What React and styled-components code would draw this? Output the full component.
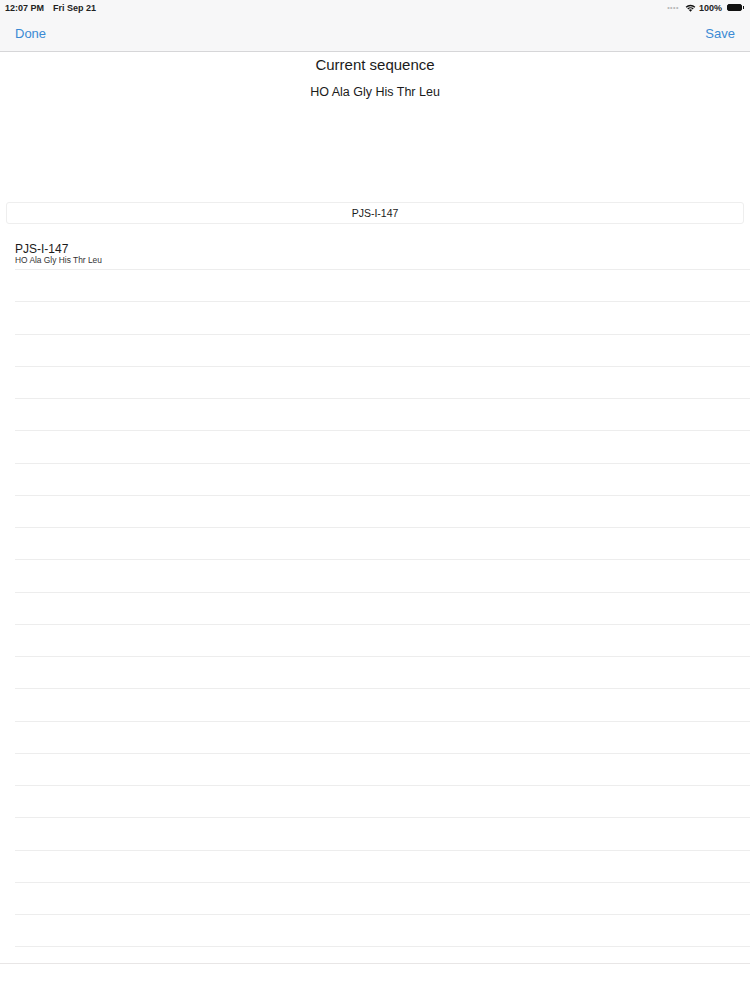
import React from 'react'
import styled, { createGlobalStyle } from 'styled-components'

const GlobalStyle = createGlobalStyle`
    html, body {
        margin: 0;
        padding: 0;
        background: #ffffff;
        font-family: "Liberation Sans", Arial, sans-serif;
        color: #111;
    }
`;

const Page = styled.div`
    width: 750px;
    height: 1000px;
    display: flex;
    flex-direction: column;
    background: #ffffff;
    overflow: hidden;
`;

const Header = styled.div`
    background: #f7f7f8;
    border-bottom: 1px solid #d6d6d8;
    height: 51px;
    display: flex;
    flex-direction: column;
`;

const StatusBar = styled.div`
    height: 15px;
    display: flex;
    align-items: center;
    justify-content: space-between;
    padding: 0 6px 0 5px;
    font-size: 9px;
    font-weight: bold;
    color: #222;
`;

const StatusLeft = styled.div`
    display: flex;
    gap: 9px;
`;

const StatusRight = styled.div`
    display: flex;
    align-items: center;
    gap: 3px;
`;

const Dots = styled.span`
    color: #b8b8b8;
    font-size: 7px;
    letter-spacing: 0.5px;
    margin-right: 3px;
`;

const Battery = styled.span`
    display: inline-block;
    width: 13px;
    height: 5px;
    border: 1px solid #111;
    border-radius: 2px;
    background: #111;
    position: relative;
    margin-left: 2px;
    margin-right: 2px;
    &::after {
        content: '';
        position: absolute;
        right: -3px;
        top: 1px;
        width: 1px;
        height: 3px;
        background: #111;
    }
`;

const NavBar = styled.div`
    flex: 1;
    display: flex;
    align-items: center;
    justify-content: space-between;
    padding: 0 15px;
`;

const NavButton = styled.span`
    color: #3b8ad4;
    font-size: 13px;
`;

const Summary = styled.div`
    display: flex;
    flex-direction: column;
    align-items: center;
    padding-top: 4px;
    height: 150px;
    box-sizing: border-box;
`;

const SummaryTitle = styled.div`
    font-size: 15px;
    color: #1b1b1b;
`;

const SummarySequence = styled.div`
    font-size: 12.5px;
    color: #1b1b1b;
    margin-top: 12px;
`;

const SearchWrap = styled.div`
    padding: 0 6px;
`;

const SearchField = styled.div`
    height: 20px;
    border: 1px solid #eeeeee;
    border-radius: 3px;
    display: flex;
    align-items: center;
    justify-content: center;
    font-size: 10.5px;
    color: #1b1b1b;
    background: #fff;
`;

const List = styled.div`
    margin-top: 12px;
    height: 727px;
    border-bottom: 1px solid #e8e6e6;
    overflow: hidden;
`;

const Row = styled.div`
    height: ${p => p.h}px;
    margin-left: 15px;
    border-bottom: 1px solid #ededed;
    box-sizing: border-box;
    display: flex;
    flex-direction: column;
    justify-content: center;
`;

const RowTitle = styled.div`
    font-size: 12px;
    color: #1b1b1b;
    line-height: 13px;
    margin-top: 3px;
`;

const RowSubtitle = styled.div`
    font-size: 8.4px;
    color: #333;
    line-height: 9px;
`;

const Wifi = () => (
    <svg width="11" height="8" viewBox="0 0 22 16">
        <path d="M11 15.5 L7.8 12.2 a4.6 4.6 0 0 1 6.4 0 Z" fill="#111" />
        <path d="M4.6 9 a9 9 0 0 1 12.8 0 l-1.9 1.9 a6.3 6.3 0 0 0 -9 0 Z" fill="#111" />
        <path d="M1.3 5.7 a13.7 13.7 0 0 1 19.4 0 l-1.9 1.9 a11 11 0 0 0 -15.6 0 Z" fill="#111" />
    </svg>
);

const App = () => {
    const rows = [];
    for (let i = 0; i < 22; i++) {
        rows.push(<Row key={i} h={32.25} />);
    }
    return (
        <Page>
            <GlobalStyle />
            <Header>
                <StatusBar>
                    <StatusLeft>
                        <span>12:07 PM</span>
                        <span>Fri Sep 21</span>
                    </StatusLeft>
                    <StatusRight>
                        <Dots>••••</Dots>
                        <Wifi />
                        <span>100%</span>
                        <Battery />
                    </StatusRight>
                </StatusBar>
                <NavBar>
                    <NavButton>Done</NavButton>
                    <NavButton>Save</NavButton>
                </NavBar>
            </Header>
            <Summary>
                <SummaryTitle>Current sequence</SummaryTitle>
                <SummarySequence>HO Ala Gly His Thr Leu</SummarySequence>
            </Summary>
            <SearchWrap>
                <SearchField>PJS-I-147</SearchField>
            </SearchWrap>
            <List>
                <Row h={34}>
                    <RowTitle>PJS-I-147</RowTitle>
                    <RowSubtitle>HO Ala Gly His Thr Leu</RowSubtitle>
                </Row>
                {rows}
            </List>
        </Page>
    );
}

export default App;
